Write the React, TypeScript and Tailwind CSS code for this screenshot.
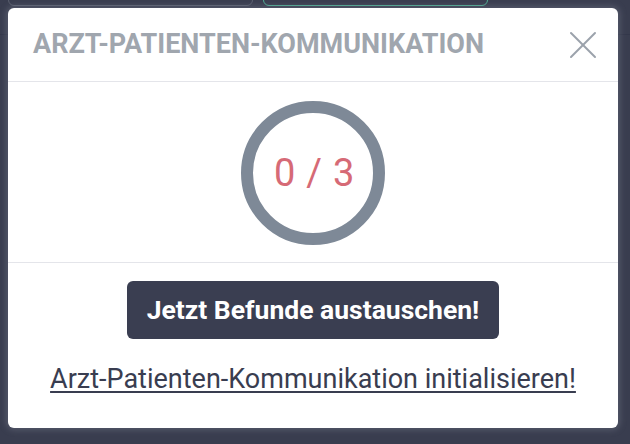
import React from 'react';

const CloseIcon: React.FC = () => (
  <svg width="28" height="28" viewBox="0 0 28 28" fill="none" stroke="#9ba2ab" strokeWidth="2" strokeLinecap="round">
    <path d="M2 2 L26 26" />
    <path d="M26 2 L2 26" />
  </svg>
);

const Progress: React.FC<{ done: number; total: number }> = ({ done, total }) => (
  <div className="relative w-[144px] h-[144px] flex items-center justify-center">
    <svg className="absolute inset-0" width="144" height="144" viewBox="0 0 144 144">
      <circle cx="72" cy="72" r="66" fill="none" stroke="#7e8997" strokeWidth="12" />
    </svg>
    <span className="relative pl-[3px] text-[38px] text-[#d66a76] tracking-[0.02em]">
      {done} / {total}
    </span>
  </div>
);

export default function App() {
  return (
    <div className="relative h-[444px] w-full overflow-hidden bg-[#393d4f]" style={{ fontFamily: 'Roboto, "Liberation Sans", sans-serif' }}>
      {/* page behind the dialog */}
      <div className="flex gap-[10px] px-[8px] -mt-[20px]">
        <div className="w-[245px] h-[26px] rounded-[6px] border border-[#5b6070]" />
        <div className="w-[225px] h-[26px] rounded-[6px] border border-[#4fae94]" />
      </div>
      <div className="mt-[28px] h-px bg-[#33374a]" />

      {/* dialog */}
      <div className="absolute left-[8px] top-[8px] w-[610px] h-[420px] rounded-[6px] bg-white shadow-[0_0_6px_2px_rgba(120,125,140,0.45)] flex flex-col">
        <div className="h-[74px] flex items-center justify-between pl-[25px] pr-[21px] border-b border-[#e4e5ea]">
          <h2 className="text-[27px] font-bold uppercase text-[#a0a6ae] leading-none">Arzt-Patienten-Kommunikation</h2>
          <CloseIcon />
        </div>
        <div className="flex justify-center pt-[19px] pb-[17px] border-b border-[#e4e5ea]">
          <Progress done={0} total={3} />
        </div>
        <div className="flex flex-col items-center pt-[18px]">
          <button className="h-[58px] px-[20px] rounded-[6px] bg-[#3a3e51] text-white text-[26.5px] font-bold">
            Jetzt Befunde austauschen!
          </button>
          <a href="#" className="mt-[24px] text-[27px] leading-[32px] text-[#393d50] underline underline-offset-[3px] decoration-[2px]">
            Arzt-Patienten-Kommunikation initialisieren!
          </a>
        </div>
      </div>
    </div>
  );
}
